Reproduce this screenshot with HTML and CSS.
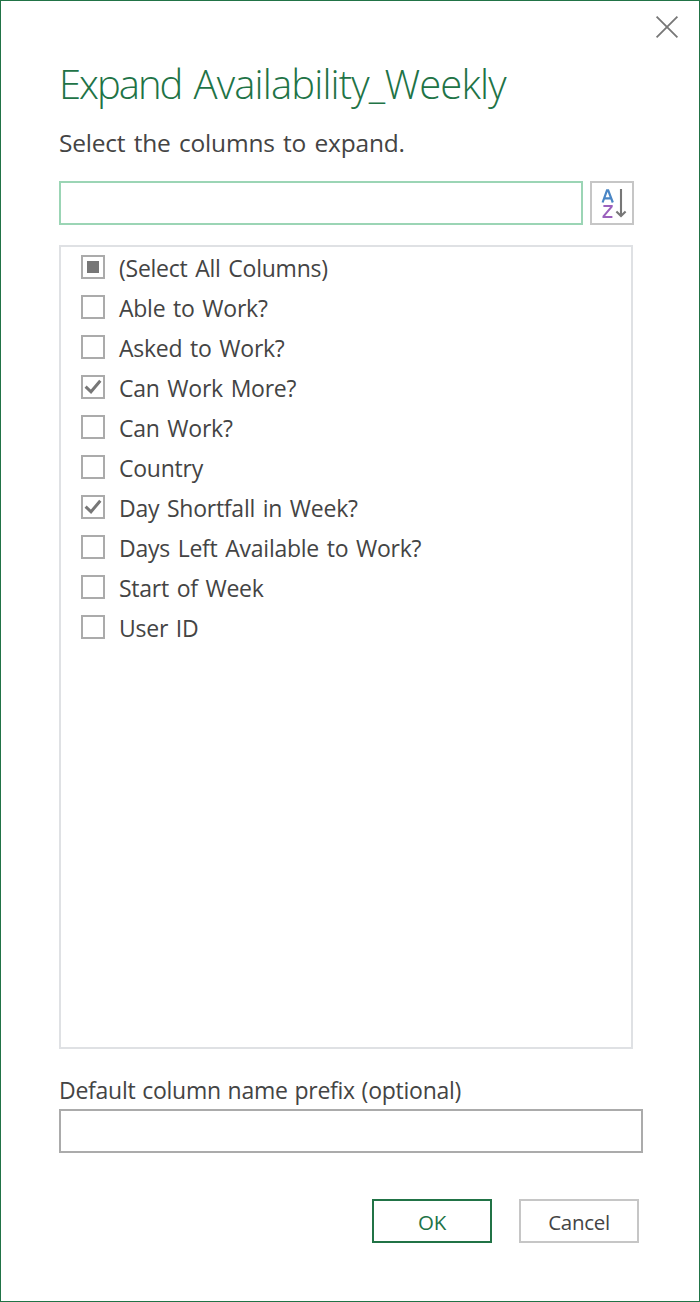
FILE: index.html
```html
<!DOCTYPE html>
<html lang="en">
<head>
<meta charset="utf-8">
<title>Expand Availability_Weekly</title>
<link rel="stylesheet" href="styles.css">
</head>
<body>
<main class="dialog">
  <button class="close" aria-label="Close"><svg width="24" height="24" viewBox="0 0 24 24"><path d="M1.6 1.6 22.4 22.4M22.4 1.6 1.6 22.4"/></svg></button>
  <h1 class="title"><span class="verb">Expand</span> Availability_Weekly</h1>
  <p class="subtitle">Select the columns to expand.</p>
  <div class="search-row">
    <input class="search" type="text" aria-label="Search">
    <button class="sort" aria-label="Sort">
      <svg width="40" height="40" viewBox="0 0 40 40"><path class="letter-a" d="M10.6 19.5 15 7.3h1.2l4.6 12.2M12 15.3h7.2"/><path class="letter-z" d="M11.4 22.9h8.3v.7l-8.2 9.8v.7h8.9"/><path class="arrow" d="M29 6v27M24.4 28.4 29 33l4.6-4.6"/></svg>
    </button>
  </div>
  <ul class="list">
    <li class="item"><span class="box"><span class="partial"></span></span><span class="label">(Select All Columns)</span></li>
    <li class="item"><span class="box"></span><span class="label">Able to Work?</span></li>
    <li class="item"><span class="box"></span><span class="label">Asked to Work?</span></li>
    <li class="item"><span class="box"><svg width="20" height="20" viewBox="0 0 20 20"><path d="M2.6 9.6 8 14.8 17.3 3.7"/></svg></span><span class="label">Can Work More?</span></li>
    <li class="item"><span class="box"></span><span class="label">Can Work?</span></li>
    <li class="item"><span class="box"></span><span class="label">Country</span></li>
    <li class="item"><span class="box"><svg width="20" height="20" viewBox="0 0 20 20"><path d="M2.6 9.6 8 14.8 17.3 3.7"/></svg></span><span class="label">Day Shortfall in Week?</span></li>
    <li class="item"><span class="box"></span><span class="label">Days Left Available to Work?</span></li>
    <li class="item"><span class="box"></span><span class="label">Start of Week</span></li>
    <li class="item"><span class="box"></span><span class="label">User ID</span></li>
  </ul>
  <label class="prefix-label" for="prefix">Default column name prefix (optional)</label>
  <input class="prefix" id="prefix" type="text">
  <div class="actions">
    <button class="button primary">OK</button>
    <button class="button">Cancel</button>
  </div>
</main>
</body>
</html>
```
FILE: styles.css
```css
* { box-sizing: border-box; }
body { margin: 0; background: #fff; }
body, button, input { font-family: "Open Sans", "Noto Sans", sans-serif; }
button, input { border-radius: 0; padding: 0; background: #fff; outline: 0; }
svg { display: block; fill: none; }
.dialog {
  display: flex;
  flex-direction: column;
  width: 700px;
  height: 1302px;
  padding: 14px 56px 0 58px;
  border: 1px solid #217346;
  color: #444;
}
.close { align-self: flex-end; width: 24px; height: 24px; margin-right: -36px; border: 0; }
.close svg { stroke: #777; stroke-width: 1.8; }
.title {
  margin: 16px 0 0;
  font-size: 40px;
  font-weight: 300;
  line-height: 58px;
  letter-spacing: -0.85px;
  word-spacing: 2.5px;
  color: #217346;
  white-space: nowrap;
}
.verb { letter-spacing: -2px; }
.subtitle { margin: 12px 0 0; font-size: 24.5px; line-height: 36px; letter-spacing: -0.2px; word-spacing: 2.2px; white-space: nowrap; }
.search-row { display: flex; gap: 7px; margin-top: 20px; }
.search { width: 524px; height: 44px; border: 2px solid #9bd5b5; }
.sort { width: 44px; height: 44px; border: 2px solid #c6c6c6; }
.letter-a { stroke: #4a86c5; stroke-width: 2.2; }
.letter-z { stroke: #9b61bd; stroke-width: 2; }
.arrow { stroke: #777; stroke-width: 2.1; }
.list {
  width: 574px;
  height: 804px;
  margin: 20px 0 0;
  padding: 0 20px;
  border: 2px solid #dfe1e4;
  list-style: none;
}
.item { display: flex; align-items: center; gap: 14px; height: 40px; }
.box { display: flex; align-items: center; justify-content: center; width: 24px; height: 24px; border: 2px solid #ababab; }
.box svg { stroke: #777; stroke-width: 3; }
.partial { width: 12px; height: 12px; background: #777; }
.label { padding-top: 1px; font-size: 23px; line-height: 34px; letter-spacing: -0.25px; word-spacing: 2px; white-space: nowrap; }
.prefix-label { margin-top: 24px; font-size: 23px; line-height: 34px; letter-spacing: -0.25px; word-spacing: 1px; }
.prefix { width: 584px; height: 44px; margin-top: 2px; border: 2px solid #ababab; }
.actions { display: flex; justify-content: flex-end; gap: 27px; margin-top: 46px; padding-right: 4px; }
.button { width: 120px; height: 44px; padding-top: 2px; border: 2px solid #c6c6c6; font-size: 20.5px; letter-spacing: -0.3px; color: #444; }
.primary { border-color: #217346; color: #217346; }
```
